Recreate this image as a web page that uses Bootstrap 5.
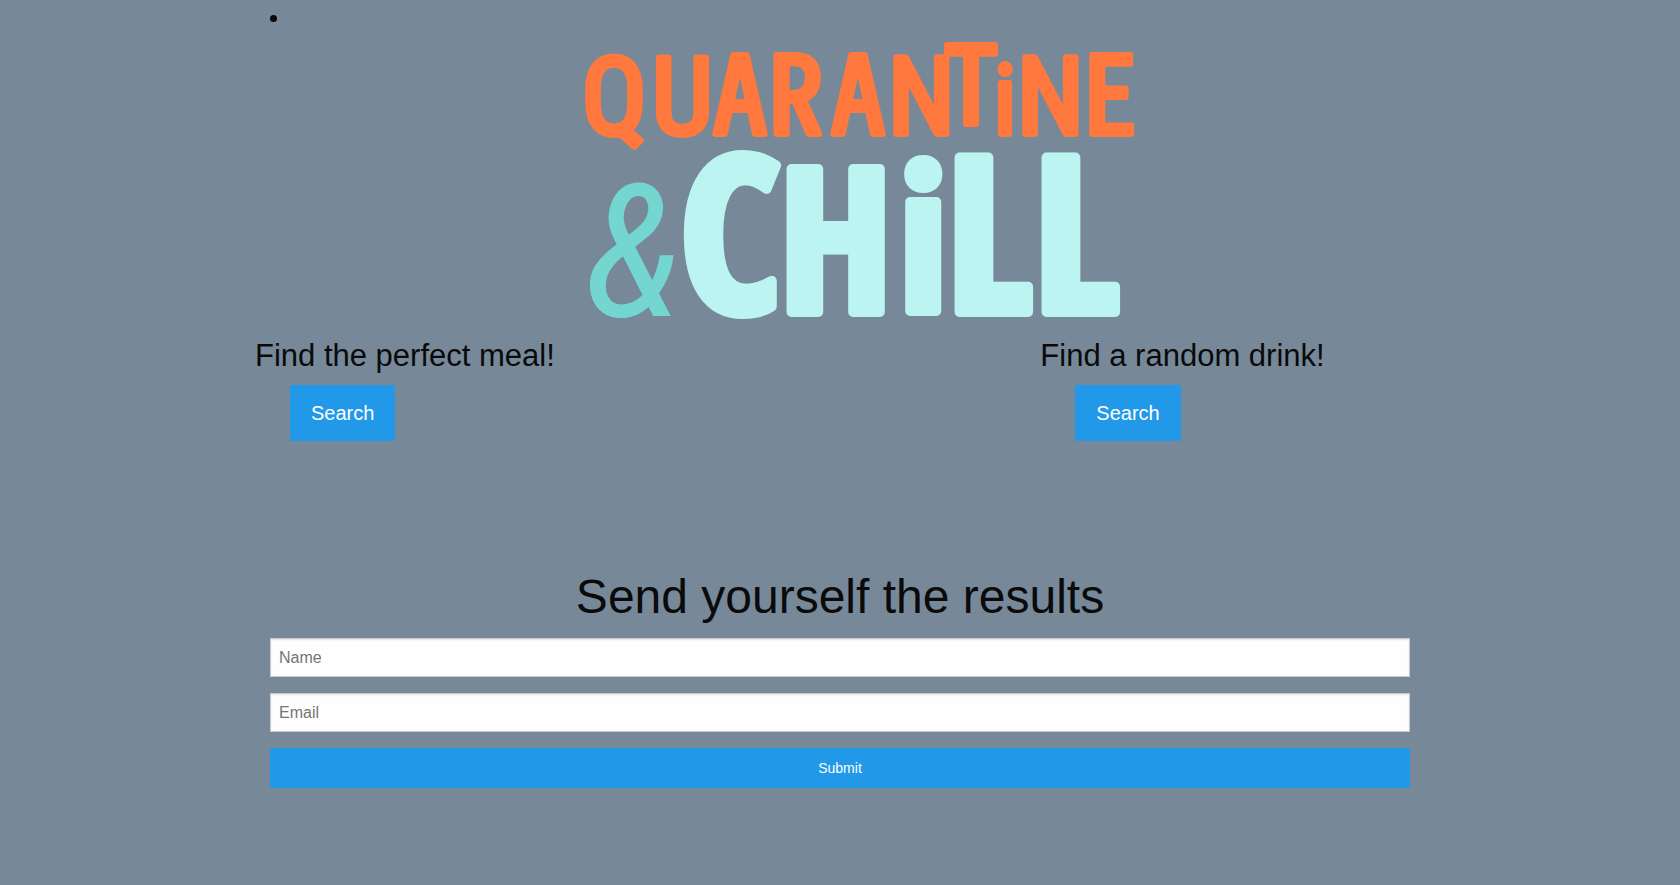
<!DOCTYPE html>
<html lang="en">
<head>
<meta charset="utf-8">
<meta name="viewport" content="width=device-width, initial-scale=1">
<title>Quarantine &amp; Chill</title>
<link href="https://cdn.jsdelivr.net/npm/bootstrap@5.3.0/dist/css/bootstrap.min.css" rel="stylesheet">
<style>
  body { background: #778899; color: #0a0a0a; font-family: "Liberation Sans", Arial, sans-serif; }
  .page { max-width: 1200px; }
  .menu-list { padding: 6px 0 0 50px; font-size: 22px; line-height: 24px; }
  .brand-wrap { padding-left: 40px; }
  .brand { width: 580px; max-width: 100%; height: auto; }
  .brand text { stroke-linejoin: round; }
  .word-top { fill: #ff783d; stroke: #ff783d; stroke-width: 6px; font: 400 108px "Roboto Condensed", Roboto, sans-serif; }
  .word-top .slim { font-family: "Noto Sans Mono CJK SC", "Noto Sans CJK SC", sans-serif; }
  .word-top .short { font-size: 96px; }
  .word-and { fill: #74d6d0; font: italic 400 184px "Roboto Condensed", Roboto, sans-serif; }
  .word-main { fill: #bbf4f0; stroke: #bbf4f0; stroke-width: 10px; font: 700 216px "Open Sans Condensed", "Open Sans", sans-serif; }
  .word-main .mid { font-size: 200px; }
  .finders { margin: 4px 7px 0 15px; }
  .finders h2 { font-size: 31px; line-height: 43px; font-weight: 400; }
  .btn-sky { --bs-btn-color: #fefefe; --bs-btn-bg: #2199e8; --bs-btn-border-color: #2199e8; --bs-btn-hover-color: #fefefe; --bs-btn-hover-bg: #1583cc; --bs-btn-hover-border-color: #1583cc; --bs-btn-border-radius: 0; --bs-btn-font-size: 14px; }
  .btn-find { --bs-btn-font-size: 20px; --bs-btn-padding-x: 20px; --bs-btn-padding-y: 17px; line-height: 20px; margin-left: 35px; }
  .mail-form { padding: 122px 30px 48px; }
  .mail-form h1 { font-size: 48px; line-height: 67px; font-weight: 400; }
  .mail-form .form-control { height: 39px; padding: 8px; border: 1px solid #cacaca; background: #fefefe; box-shadow: inset 0 1px 2px rgba(10,10,10,.1); line-height: 21px; }
  .mail-form .form-control::placeholder { color: #757575; }
  .mail-form .btn { height: 40px; }
</style>
</head>
<body>
<main class="page container-fluid p-0">
  <ul class="menu-list mb-0"><li>&nbsp;</li></ul>
  <div class="brand-wrap text-center">
    <svg class="brand d-inline-block align-top" viewBox="0 0 580 300" role="img" aria-label="Quarantine &amp; Chill">
      <text class="word-top" y="104" x="12 82">QU<tspan class="slim" x="143 199 261">ARA</tspan><tspan x="318">N</tspan><tspan class="slim" x="374" y="94">T</tspan><tspan class="short" x="424" y="104">i</tspan><tspan x="447">N</tspan><tspan class="slim" x="513">E</tspan></text>
      <text class="word-and" x="14" y="286">&amp;</text>
      <text class="word-main" y="282" x="110">C<tspan class="mid" x="209 329">Hi</tspan><tspan x="376 463">LL</tspan></text>
    </svg>
  </div>
  <div class="finders row g-0">
    <section class="col-8">
      <h2 class="mb-2">Find the perfect meal!</h2>
      <button type="button" class="btn btn-sky btn-find">Search</button>
    </section>
    <section class="col-4">
      <h2 class="mb-2">Find a random drink!</h2>
      <button type="button" class="btn btn-sky btn-find">Search</button>
    </section>
  </div>
  <form class="mail-form">
    <h1 class="text-center mb-2">Send yourself the results</h1>
    <input type="text" class="form-control rounded-0 mb-3" placeholder="Name" aria-label="Name">
    <input type="email" class="form-control rounded-0 mb-3" placeholder="Email" aria-label="Email">
    <button type="submit" class="btn btn-sky w-100">Submit</button>
  </form>
</main>
<script src="https://cdn.jsdelivr.net/npm/bootstrap@5.3.0/dist/js/bootstrap.bundle.min.js"></script>
</body>
</html>
